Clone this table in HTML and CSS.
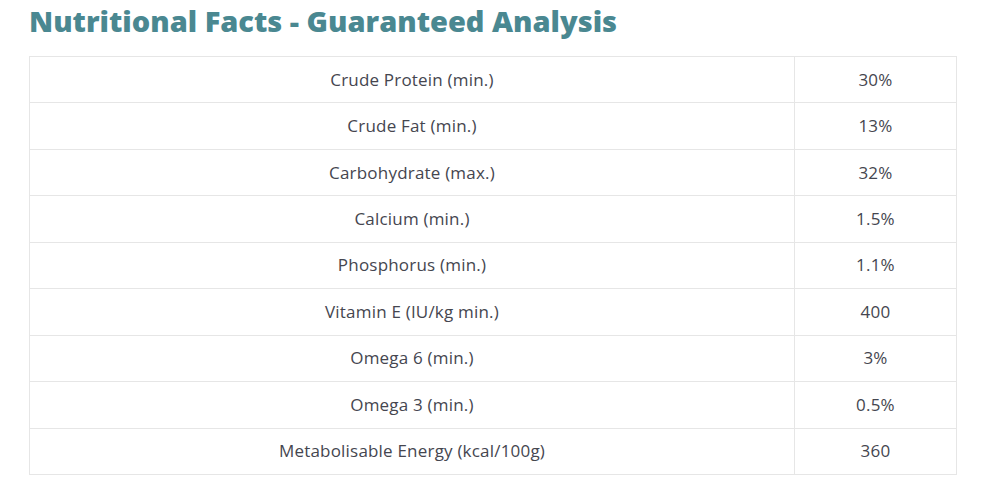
FILE: index.html
```html
<!DOCTYPE html>
<html lang="en">
<head>
<meta charset="utf-8">
<title>Nutritional Facts</title>
<link rel="stylesheet" href="styles.css">
</head>
<body>
<section class="facts">
  <h2 class="facts-title">Nutritional Facts - Guaranteed Analysis</h2>
  <table class="facts-table">
    <tbody>
      <tr><td class="label">Crude Protein (min.)</td><td class="value">30%</td></tr>
      <tr><td class="label">Crude Fat (min.)</td><td class="value">13%</td></tr>
      <tr><td class="label">Carbohydrate (max.)</td><td class="value">32%</td></tr>
      <tr><td class="label">Calcium (min.)</td><td class="value">1.5%</td></tr>
      <tr><td class="label">Phosphorus (min.)</td><td class="value">1.1%</td></tr>
      <tr><td class="label">Vitamin E (IU/kg min.)</td><td class="value">400</td></tr>
      <tr><td class="label">Omega 6 (min.)</td><td class="value">3%</td></tr>
      <tr><td class="label">Omega 3 (min.)</td><td class="value">0.5%</td></tr>
      <tr><td class="label">Metabolisable Energy (kcal/100g)</td><td class="value">360</td></tr>
    </tbody>
  </table>
</section>
</body>
</html>
```
FILE: styles.css
```css
html, body {
  margin: 0;
  padding: 0;
  background: #ffffff;
}
body {
  font-family: "Open Sans", "Noto Sans", sans-serif;
  color: #45464f;
}
.facts {
  padding: 0 24px 0 29px;
}
.facts-title {
  margin: 0;
  padding-top: 2px;
  height: 54px;
  font-size: 29px;
  line-height: 38px;
  font-weight: 800;
  color: #4a8891;
  letter-spacing: 0;
}
.facts-table {
  width: 928px;
  border-collapse: collapse;
  table-layout: fixed;
}
.facts-table td {
  border: 1px solid #e6e6e6;
  height: 45.44px;
  padding: 0;
  text-align: center;
  font-size: 17px;
  font-weight: 500;
  letter-spacing: 0.2px;
  line-height: 20px;
  vertical-align: middle;
}
.facts-table .label {
  width: 764px;
}
```
